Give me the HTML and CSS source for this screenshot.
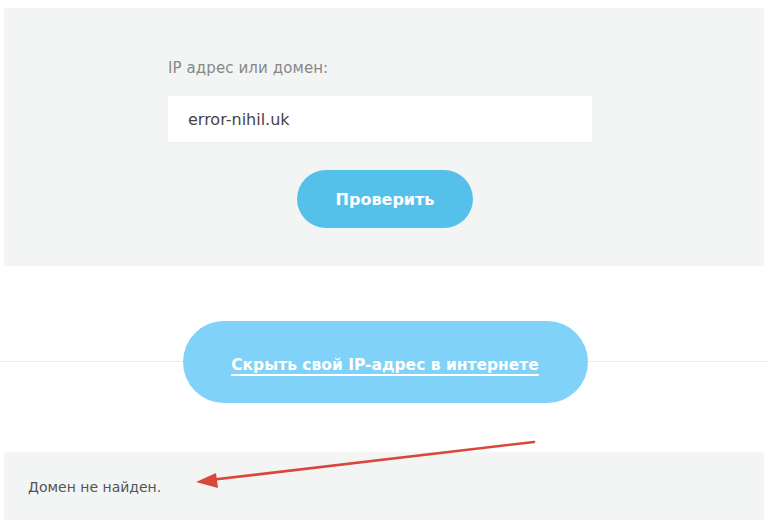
FILE: index.html
```html
<!DOCTYPE html>
<html lang="ru">
<head>
<meta charset="utf-8">
<title>Проверка IP</title>
<link rel="stylesheet" href="styles.css">
</head>
<body>
<div class="page">
  <section class="check-panel">
    <form class="check-form">
      <label class="field-label" for="host">IP адрес или домен:</label>
      <div class="field-input" id="host">error-nihil.uk</div>
      <div class="actions">
        <span class="btn-check">Проверить</span>
      </div>
    </form>
  </section>

  <section class="hide-block">
    <span class="btn-hide"><span class="btn-hide-text">Скрыть свой IP-адрес в интернете</span></span>
  </section>

  <section class="result-panel">
    <p class="result-text">Домен не найден.</p>
  </section>

  <svg class="arrow" width="768" height="529" viewBox="0 0 768 529">
    <line x1="534" y1="442" x2="210" y2="480" stroke="#d9473b" stroke-width="2.6" stroke-linecap="round"/>
    <polygon points="196,482 216,473 218,488" fill="#d9473b"/>
  </svg>
</div>
</body>
</html>
```

FILE: styles.css
```css
* { box-sizing: border-box; }
html, body { margin: 0; padding: 0; background: #fff; }
body { font-family: "DejaVu Sans", "Noto Sans", sans-serif; width: 768px; height: 529px; overflow: hidden; }
.page { position: relative; width: 768px; height: 529px; padding-top: 8px; }

.check-panel {
  margin: 0 4px;
  height: 258px;
  background: #f3f5f5;
  border-radius: 3px;
  padding: 50px 0 0 164px;
}
.check-form { width: 424px; display: flex; flex-direction: column; }
.field-label {
  font-size: 15px;
  line-height: 21px;
  color: #878787;
  letter-spacing: 0.1px;
}
.field-input {
  margin-top: 17px;
  height: 46px;
  background: #fff;
  padding: 0 20px;
  display: flex;
  align-items: center;
  font-size: 16px;
  color: #444;
  box-shadow: 0 1px 1px rgba(0,0,0,0.03);
}
.actions { display: flex; justify-content: center; margin-top: 28px; padding-left: 10px; }
.btn-check {
  width: 176px;
  height: 58px;
  border-radius: 29px;
  background: #55c1ea;
  color: #fff;
  font-weight: bold;
  font-size: 16px;
  display: flex;
  align-items: center;
  justify-content: center;
}

.hide-block {
  margin-top: 55px;
  height: 82px;
  display: flex;
  justify-content: center;
  background: linear-gradient(#ececec, #ececec) 0 40px / 100% 1px no-repeat;
}
.btn-hide {
  width: 405px;
  height: 82px;
  border-radius: 41px;
  background: #80d2f8;
  display: flex;
  align-items: center;
  justify-content: center;
  margin-left: 2px;
}
.btn-hide-text {
  color: #fff;
  font-weight: bold;
  font-size: 15.5px;
  text-decoration: underline;
  text-underline-offset: 4px;
  text-decoration-thickness: 1.5px;
  padding-top: 6px;
}

.result-panel {
  margin: 49px 4px 0;
  height: 68px;
  background: #f3f4f4;
  border-radius: 3px;
  padding: 0 24px;
  display: flex;
  align-items: center;
}
.result-text { margin: 2px 0 0; font-size: 14px; color: #555; }

.arrow { position: absolute; left: 0; top: 0; pointer-events: none; }
```
